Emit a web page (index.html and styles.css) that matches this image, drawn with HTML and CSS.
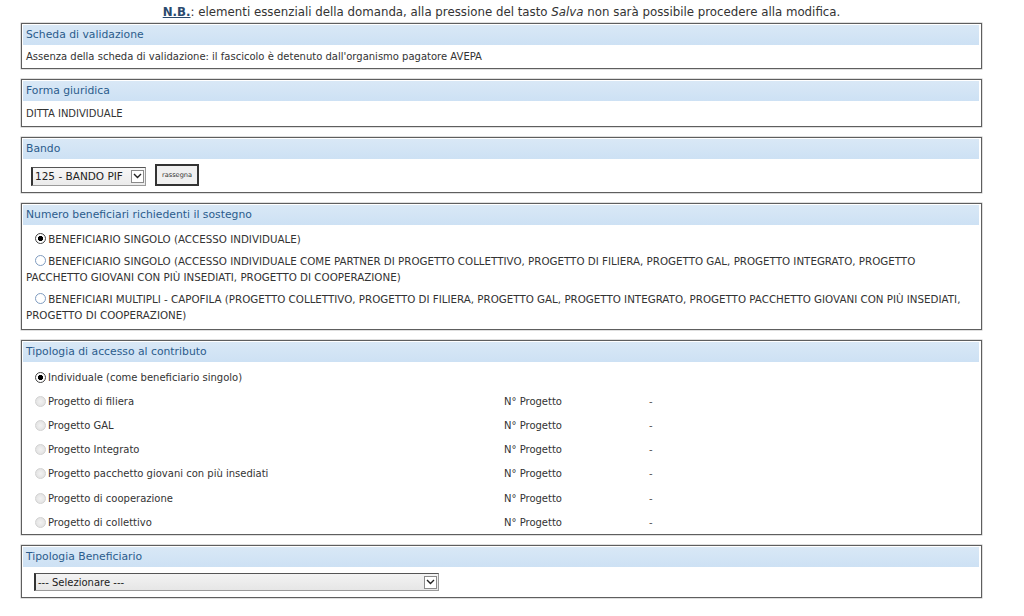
FILE: index.html
```html
<!DOCTYPE html>
<html lang="it">
<head>
<meta charset="utf-8">
<title>Domanda</title>
<link rel="stylesheet" href="styles.css">
</head>
<body>
<div class="page">
  <p class="note"><b class="nb">N.B.</b>: elementi essenziali della domanda, alla pressione del tasto <i>Salva</i> non sarà possibile procedere alla modifica.</p>

  <section class="box">
    <h2 class="box-title">Scheda di validazione</h2>
    <div class="box-body text">Assenza della scheda di validazione: il fascicolo è detenuto dall'organismo pagatore AVEPA</div>
  </section>

  <section class="box">
    <h2 class="box-title">Forma giuridica</h2>
    <div class="box-body text text-roomy">DITTA INDIVIDUALE</div>
  </section>

  <section class="box">
    <h2 class="box-title">Bando</h2>
    <div class="box-body controls">
      <div class="select select-bando">
        <span class="select-value">125 - BANDO PIF</span>
        <span class="select-arrow"><svg width="9" height="6" viewBox="0 0 9 6"><polyline points="1,1 4.5,4.5 8,1" fill="none" stroke="#222" stroke-width="1.4"/></svg></span>
      </div>
      <button class="btn" type="button">rassegna</button>
    </div>
  </section>

  <section class="box">
    <h2 class="box-title">Numero beneficiari richiedenti il sostegno</h2>
    <div class="box-body choices">
      <div class="choice"><span class="radio checked"></span> BENEFICIARIO SINGOLO (ACCESSO INDIVIDUALE)</div>
      <div class="choice"><span class="radio off"></span> BENEFICIARIO SINGOLO (ACCESSO INDIVIDUALE COME PARTNER DI PROGETTO COLLETTIVO, PROGETTO DI FILIERA, PROGETTO GAL, PROGETTO INTEGRATO, PROGETTO PACCHETTO GIOVANI CON PIÙ INSEDIATI, PROGETTO DI COOPERAZIONE)</div>
      <div class="choice"><span class="radio off"></span> BENEFICIARI MULTIPLI - CAPOFILA (PROGETTO COLLETTIVO, PROGETTO DI FILIERA, PROGETTO GAL, PROGETTO INTEGRATO, PROGETTO PACCHETTO GIOVANI CON PIÙ INSEDIATI, PROGETTO DI COOPERAZIONE)</div>
    </div>
  </section>

  <section class="box">
    <h2 class="box-title">Tipologia di accesso al contributo</h2>
    <div class="box-body access">
      <div class="access-row"><span class="radio checked"></span><span class="access-label">Individuale (come beneficiario singolo)</span><span></span><span></span></div>
      <div class="access-row"><span class="radio disabled"></span><span class="access-label">Progetto di filiera</span><span class="num">N° Progetto</span><span class="dash">-</span></div>
      <div class="access-row"><span class="radio disabled"></span><span class="access-label">Progetto GAL</span><span class="num">N° Progetto</span><span class="dash">-</span></div>
      <div class="access-row"><span class="radio disabled"></span><span class="access-label">Progetto Integrato</span><span class="num">N° Progetto</span><span class="dash">-</span></div>
      <div class="access-row"><span class="radio disabled"></span><span class="access-label">Progetto pacchetto giovani con più insediati</span><span class="num">N° Progetto</span><span class="dash">-</span></div>
      <div class="access-row"><span class="radio disabled"></span><span class="access-label">Progetto di cooperazione</span><span class="num">N° Progetto</span><span class="dash">-</span></div>
      <div class="access-row"><span class="radio disabled"></span><span class="access-label">Progetto di collettivo</span><span class="num">N° Progetto</span><span class="dash">-</span></div>
    </div>
  </section>

  <section class="box">
    <h2 class="box-title">Tipologia Beneficiario</h2>
    <div class="box-body controls controls-wide">
      <div class="select select-wide">
        <span class="select-value">--- Selezionare ---</span>
        <span class="select-arrow"><svg width="9" height="6" viewBox="0 0 9 6"><polyline points="1,1 4.5,4.5 8,1" fill="none" stroke="#222" stroke-width="1.4"/></svg></span>
      </div>
    </div>
  </section>
</div>
</body>
</html>
```

FILE: styles.css
```css
html, body {
  margin: 0;
  padding: 0;
  background: #ffffff;
}

body {
  font-family: "DejaVu Sans", Verdana, sans-serif;
  color: #333333;
}

.page {
  width: 961px;
  margin-left: 21px;
}

.note {
  margin: 0;
  height: 23px;
  line-height: 24px;
  text-align: center;
  font-size: 11.8px;
  color: #333;
}

.nb {
  font-weight: bold;
  text-decoration: underline;
  color: #2a4a6e;
}

.box {
  border: 1px solid #5e5e5e;
  box-shadow: 0 0 0 0.5px rgba(0, 0, 0, 0.25);
  padding: 1px 2px 0 1px;
  margin-bottom: 10px;
  background: #fff;
}

.box-title {
  margin: 0;
  height: 20px;
  line-height: 20px;
  padding-left: 3px;
  font-size: 10.8px;
  font-weight: normal;
  color: #2b5c8c;
  background: linear-gradient(#d9e8f6, #cde1f4);
}

.box-body {
  padding: 5px 3px 4px 3px;
}

.text {
  font-size: 10px;
  line-height: 14px;
}

.text-roomy {
  padding-top: 6px;
  padding-bottom: 5px;
}

.controls {
  display: flex;
  align-items: center;
  gap: 9px;
  padding: 7px 0 6px 8px;
}

.controls-wide {
  padding: 6px 0 6px 11px;
}

.select {
  display: flex;
  align-items: center;
  justify-content: space-between;
  box-sizing: border-box;
  border: 1px solid #9a9a9a;
  border-left: 2px solid #333;
  border-top-color: #555;
  background: linear-gradient(#f7f7f7, #ebebeb);
  color: #222;
  padding-left: 2px;
  padding-right: 1px;
}

.select-bando {
  width: 115px;
  height: 19px;
  font-size: 10.5px;
}

.select-wide {
  width: 405px;
  height: 18px;
  font-size: 10px;
  background: linear-gradient(#f3f3f3, #e6e6e6);
}

.select-arrow {
  display: flex;
  align-items: center;
  justify-content: center;
  width: 13px;
  height: 13px;
  box-sizing: border-box;
  border: 1px solid #8a8a8a;
  background: #fff;
}

.btn {
  width: 44px;
  height: 22px;
  padding: 0;
  border: 2px solid #333;
  background: #f0f0f0;
  font-family: "DejaVu Sans", Verdana, sans-serif;
  font-size: 6.6px;
  color: #333;
  margin-top: -2px;
}

.choices {
  padding: 3px 3px 3px 3px;
}

.choice {
  font-size: 10.3px;
  line-height: 16px;
  padding: 3px 0;
  text-indent: 9px;
  color: #333;
}

.choice .radio {
  margin-right: -1px;
}

.radio {
  display: inline-block;
  width: 11px;
  height: 11px;
  box-sizing: border-box;
  border-radius: 50%;
  border: 1px solid #444;
  background: #fff;
  vertical-align: -1px;
  text-indent: 0;
}

.radio.checked {
  background: radial-gradient(circle, #000 0, #000 2.3px, #fff 2.9px);
}

.radio.off {
  border-color: #7f9cc0;
}

.radio.disabled {
  border-color: #d2d2d2;
  background: radial-gradient(circle, #f2f2f2 0, #e2e2e2 5px);
}

.access {
  padding: 3px 0 0 0;
}

.access-row {
  display: grid;
  grid-template-columns: 13px 456px 145px auto;
  align-items: center;
  height: 24.2px;
  padding-left: 12px;
  font-size: 10px;
  color: #333;
}

.access-row .radio {
  vertical-align: middle;
}

.num {
  color: #333;
}

.dash {
  color: #555;
}
```
